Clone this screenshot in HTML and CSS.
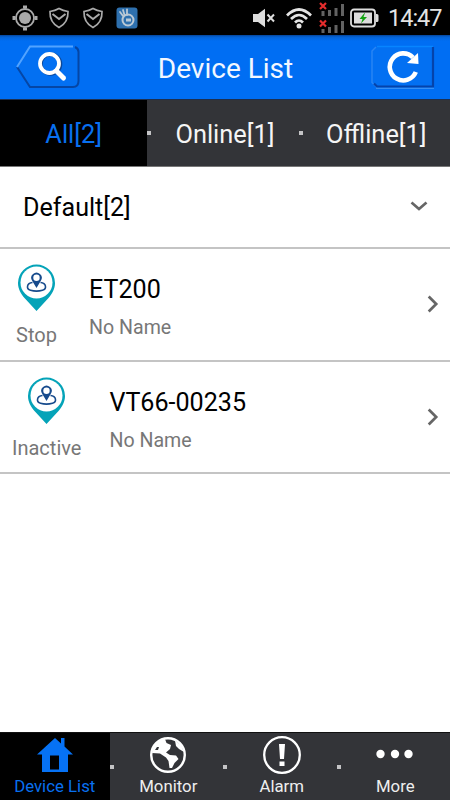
FILE: index.html
```html
<!DOCTYPE html>
<html lang="en">
<head>
<meta charset="utf-8">
<title>Device List</title>
<link rel="stylesheet" href="styles.css">
</head>
<body>
<svg width="0" height="0" class="defs">
  <symbol id="shield" viewBox="0 0 22 22">
    <path d="M2 4.500Q7 3.800 11 1.500Q15 3.800 20 4.500Q20.500 15.500 11 20.500Q1.500 15.500 2 4.500Z" fill="none" stroke="#aaa" stroke-width="1.700"/>
    <path d="M4.500 7L11 12L17.500 7" fill="none" stroke="#aaa" stroke-width="2"/>
  </symbol>
  <symbol id="pin" viewBox="0 0 39 47">
    <path d="M19.500 .5A18.500 18.500 0 0 0 1 19C1 25 4 30 7.500 34L19.500 47L31.500 34C35 30 38 25 38 19A18.500 18.500 0 0 0 19.500 .5Z" fill="#04a3b8"/>
    <circle cx="19.500" cy="18.500" r="16" fill="#fff"/>
    <path d="M15.500 18.500C9.500 19 9 25 13.500 26.300Q19.500 28 25.500 26.300C30 25 29.500 19 23.500 18.500" fill="none" stroke="#164a8c" stroke-width="1.600"/>
    <path d="M19.500 24L15.300 17A5.200 5.200 0 1 1 23.700 17Z" fill="#164a8c"/>
    <circle cx="19.500" cy="13.800" r="3.200" fill="#fff"/>
  </symbol>
  <symbol id="chevron" viewBox="0 0 12 20">
    <path d="M1.700 2.500L9.200 10L1.700 17.500" fill="none" stroke="#666" stroke-width="2.700"/>
  </symbol>
</svg>
<div class="screen">
  <header class="status">
    <svg class="gps" viewBox="0 0 26 26"><circle cx="13" cy="13" r="9" fill="none" stroke="#aaa" stroke-width="1.800"/><circle cx="13" cy="13" r="6" fill="#aaa"/><path d="M11 .5h4v3h-4zM11 22.500h4v3h-4zM.5 11h3v4h-3zM22.500 11h3v4h-3z" fill="#aaa"/></svg>
    <svg class="shield"><use href="#shield"/></svg>
    <svg class="shield"><use href="#shield"/></svg>
    <svg class="app" viewBox="0 0 22 22"><rect x=".5" y=".5" width="21" height="21" rx="3" fill="#2e70ae"/><circle cx="12" cy="13" r="5.500" fill="none" stroke="#bbc9d5" stroke-width="2"/><rect x="10" y="11.500" width="5" height="3" fill="#bbc9d5"/><path d="M7 9L4 5M8.500 8L7 3M11 8L11 2.500" stroke="#bbc9d5" stroke-width="1.800" stroke-linecap="round"/></svg>
    <span class="spacer"></span>
    <svg class="mute" viewBox="0 0 24 20"><path d="M1 6h5L13 .8V19.200L6 14H1z" fill="#ddd"/><path d="M15.500 6.500l6.500 7M22 6.500l-6.500 7" stroke="#ddd" stroke-width="2"/></svg>
    <svg class="wifi" viewBox="0 0 26 22"><g fill="none" stroke="#e4e4e4" stroke-width="2.700"><path d="M1 8.500Q13-3.500 25 8.500"/><path d="M5 12Q13 4 21 12"/><path d="M9 15.500Q13 11.500 17 15.500"/></g><circle cx="13" cy="19" r="2.500" fill="#e4e4e4"/></svg>
    <svg class="signal" viewBox="0 0 26 32"><path d="M2.500 9h3v5h-3zM9 8h3v6H9zM15.500 6h3v8h-3zM22 2h3v12h-3zM2.500 27h3v4h-3zM9 25h3v6H9zM15.500 23h3v8h-3zM22 19h3v12h-3z" fill="#626262"/><path d="M1 1l6 6M7 1l-6 6M1 18.500l6 6M7 18.500l-6 6" stroke="#e52d2d" stroke-width="2.200"/></svg>
    <svg class="battery" viewBox="0 0 29 20"><rect x="1" y="1.500" width="24" height="17" rx="3" fill="none" stroke="#ddd" stroke-width="1.800"/><path d="M26 6h1a1.500 1.500 0 0 1 1.500 1.500v5A1.500 1.500 0 0 1 27 14h-1z" fill="#ddd"/><rect x="4" y="4.500" width="18" height="11" fill="#ddd"/><path d="M14.500 5L9.500 11h3L11 15.500l6-6.500h-3.500L15 5z" fill="#12a312"/></svg>
    <span class="clock">14:47</span>
  </header>
  <section class="titlebar">
    <svg class="search" viewBox="0 0 66 46"><path d="M15 2.500H58Q63.500 2.500 63.500 8V37Q63.500 43 58 43H15L2 23Z" fill="#0370f2"/><path d="M2 23L15 43H58Q63.500 43 63.500 37V8Q63.500 4.500 60 3" fill="none" stroke="#0546a5" stroke-width="2"/><path d="M2 23L15 2.500H58" fill="none" stroke="#52a3ff" stroke-width="2"/><circle cx="35.500" cy="20" r="9.800" fill="none" stroke="#0b4799" stroke-width="4"/><circle cx="34.500" cy="19.500" r="9.500" fill="none" stroke="#fff" stroke-width="3.800"/><path d="M41.500 27l7 7" stroke="#fff" stroke-width="5" stroke-linecap="round"/></svg>
    <h1 class="title">Device List</h1>
    <svg class="refresh" viewBox="0 0 66 46"><path d="M7 2.500H63V42.500H7L2.500 38V7Z" fill="#0370f2"/><path d="M7 43.500L2 38.500V7L6 3" fill="none" stroke="#2985f4" stroke-width="1.500"/><path d="M7 2.500H63" stroke="#0785ff" stroke-width="1.500"/><path d="M63 3V42.500H7L4 39.500" fill="none" stroke="#0543aa" stroke-width="2.200"/><path d="M6 44.300H64" stroke="#4398f5" stroke-width="1"/><path d="M45.800 28A13.500 13.500 0 1 1 43 13.500" fill="none" stroke="#fff" stroke-width="4.600"/><path d="M48 9L48.500 20L37 19Z" fill="#fff"/></svg>
  </section>
  <nav class="tabs">
    <a class="tab tab-active">All[2]</a><i class="dot"></i><a class="tab">Online[1]</a><i class="dot"></i><a class="tab">Offline[1]</a>
  </nav>
  <main class="list">
    <div class="group"><span class="name">Default[2]</span><svg class="down" viewBox="0 0 18 10"><path d="M1.500 1.500L9 8L16.500 1.500" fill="none" stroke="#666" stroke-width="2.700"/></svg></div>
    <div class="device">
      <div class="state"><svg class="pin"><use href="#pin"/></svg><span class="stop">Stop</span></div>
      <div class="info"><span class="name">ET200</span><span class="sub">No Name</span></div>
      <svg class="chevron"><use href="#chevron"/></svg>
    </div>
    <div class="device">
      <div class="state"><svg class="pin"><use href="#pin"/></svg><span>Inactive</span></div>
      <div class="info"><span class="name">VT66-00235</span><span class="sub">No Name</span></div>
      <svg class="chevron"><use href="#chevron"/></svg>
    </div>
  </main>
  <footer class="bottom">
    <a class="item item-active"><svg class="icon" viewBox="0 0 40 40"><path d="M20 3L26 8.500V3h3.500v8.500L38 19.500H33V37H7V19.500H2Z" fill="#0672f5"/><path d="M15 20.500h9v14h-9z" fill="#000"/></svg><span>Device List</span></a>
    <i class="dot"></i>
    <a class="item"><svg class="icon" viewBox="0 0 40 40"><circle cx="20" cy="20" r="16.800" fill="none" stroke="#fff" stroke-width="2.400"/><path d="M17 4L18.500 8L23 10L22 14L18 17.500L22 20L28 20.500L30.500 24L26.500 28L24 33H21.500L20.500 26L18 22.500L12 18.500L4 18L5 12L12 5Z" fill="#fff"/><path d="M27 5.500L33 10L36 17L31 14L28 11Z" fill="#fff"/><path d="M7 15l2-3h2l-1 3z" fill="#333438"/></svg><span>Monitor</span></a>
    <i class="dot"></i>
    <a class="item"><svg class="icon" viewBox="0 0 40 40"><circle cx="20" cy="20" r="17.800" fill="none" stroke="#fff" stroke-width="2.300"/><path d="M17 9h6l-1 15h-4zM17.500 26.500h5v4.500h-5z" fill="#fff"/></svg><span>Alarm</span></a>
    <i class="dot"></i>
    <a class="item"><svg class="icon" viewBox="0 0 40 40"><g fill="#fff"><circle cx="5.500" cy="19" r="4.200"/><circle cx="20" cy="19" r="4.200"/><circle cx="33.500" cy="19" r="4.200"/></g></svg><span>More</span></a>
  </footer>
</div>
</body>
</html>
```
FILE: styles.css
```css
* { box-sizing: border-box; }
body { margin: 0; font-family: Roboto, "Liberation Sans", sans-serif; background: #fff; }
svg { display: block; flex: none; overflow: visible; }
.defs { position: absolute; }
.screen { width: 450px; height: 800px; display: flex; flex-direction: column; overflow: hidden; }

.status { height: 35px; flex: none; background: #000; display: flex; align-items: center; padding: 0 8px 0 12px; }
.gps { width: 26px; height: 26px; margin-right: 10px; }
.shield { width: 22px; height: 22px; margin-right: 12px; }
.app { width: 22px; height: 22px; }
.spacer { flex: 1; }
.mute { width: 24px; height: 20px; margin-right: 10px; }
.wifi { width: 26px; height: 22px; margin-right: 7px; }
.signal { width: 26px; height: 32px; margin-right: 5px; }
.battery { width: 29px; height: 20px; margin-right: 9px; }
.clock { color: #e4e4e4; font-size: 23.5px; line-height: 34px; width: 54px; padding-top: 1px; white-space: nowrap; letter-spacing: -1px; }

.titlebar { height: 64px; flex: none; background: linear-gradient(#05449a, #0563d5 2px, #006ef3 6px, #006ef3); display: flex; align-items: center; justify-content: space-between; padding: 0 14px 0 15px; }
.search, .refresh { width: 66px; height: 46px; }
.title { margin: 0; color: #f2f7ff; font-size: 28px; font-weight: 400; line-height: 62px; padding-top: 3px; white-space: nowrap; }

.tabs { height: 68px; flex: none; background: #333438; display: flex; align-items: center; border-top: 1px solid #1d3050; border-bottom: 1px solid #777; }
.tab { flex: 1; height: 66px; line-height: 69px; text-align: center; font-size: 25.4px; color: #f5f5f5; white-space: nowrap; }
.tab-active, .item-active { background: #000; color: #0870f0; }
.dot { width: 4px; height: 4px; flex: none; background: #c4c4c6; }

.list { flex: 1; }
.group { height: 82px; display: flex; align-items: center; justify-content: space-between; padding: 0 22px 0 23px; border-bottom: 2px solid #c4c4c4; }
.group .name { padding-top: 2px; }
.name { font-size: 25.1px; line-height: 30px; color: #000; white-space: nowrap; }
.down { width: 18px; height: 10px; margin-bottom: 2px; }
.device { height: 112.5px; display: flex; padding: 0 11px 0 12px; border-bottom: 2px solid #c4c4c4; }
.state { min-width: 49px; display: flex; flex-direction: column; align-items: center; padding-top: 15px; margin-right: 28px; font-size: 20px; line-height: 24px; color: #777; }
.pin { width: 39px; height: 47px; margin-bottom: 12px; }
.info { flex: 1; display: flex; flex-direction: column; padding-top: 26px; }
.sub { margin-top: 11px; font-size: 19.6px; line-height: 24px; color: #777; }
.chevron { width: 12px; height: 20px; align-self: center; }

.bottom { height: 68px; flex: none; background: #333438; display: flex; align-items: center; border-top: 1px solid #111; }
.item { flex: 1; height: 67px; display: flex; flex-direction: column; align-items: center; font-size: 16.8px; line-height: 22px; color: #eee; white-space: nowrap; padding-top: 2px; }
.item-active { color: #0870f0; }
.icon { width: 40px; height: 40px; }
```
